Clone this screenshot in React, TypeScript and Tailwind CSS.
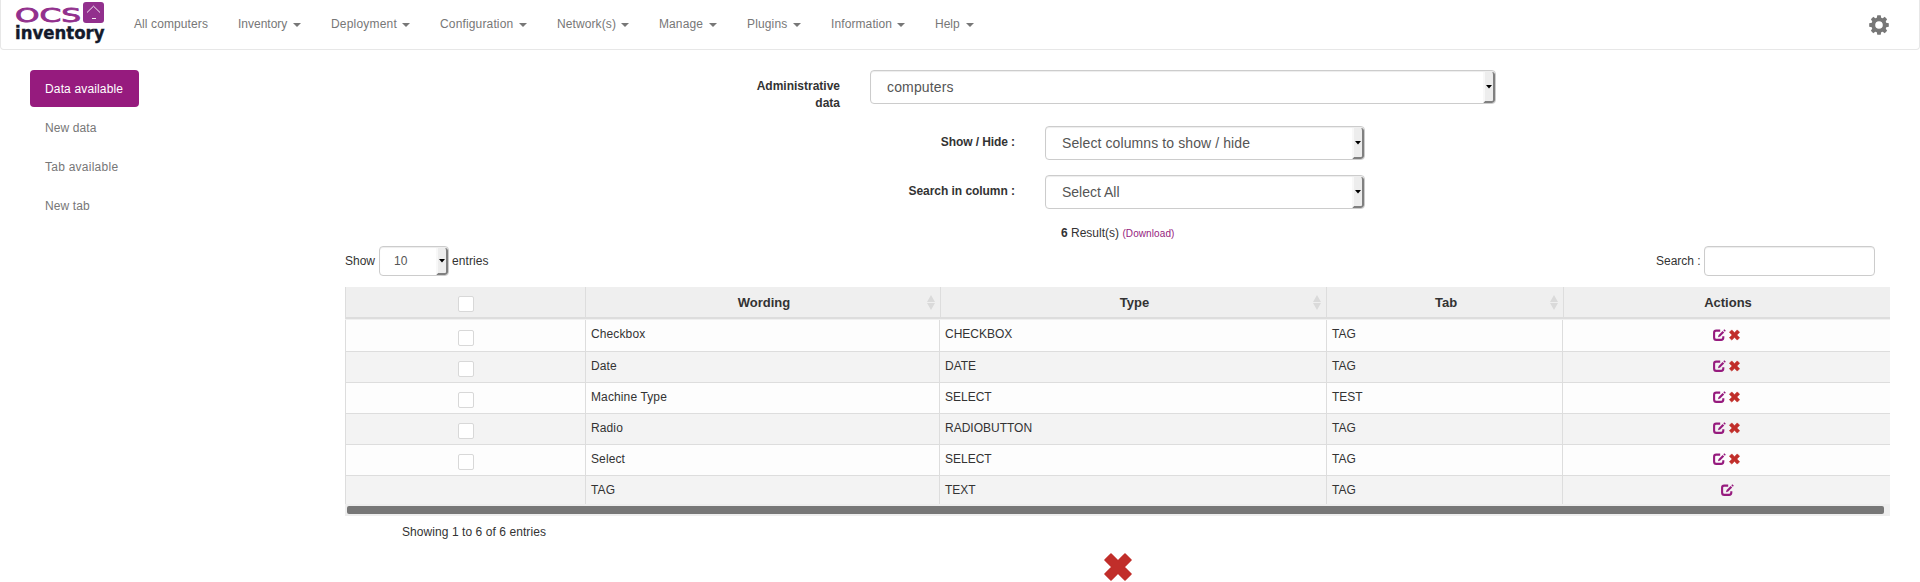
import React from "react";

const navItems = [
  { label: "All computers", cls: "w-[104px] tracking-[0.1px]", caret: false },
  { label: "Inventory", cls: "w-[93px]", caret: true },
  { label: "Deployment", cls: "w-[109px] tracking-[0.2px]", caret: true },
  { label: "Configuration", cls: "w-[117px] tracking-[0.15px]", caret: true },
  { label: "Network(s)", cls: "w-[102px] tracking-[0.1px]", caret: true },
  { label: "Manage", cls: "w-[88px] tracking-[0.1px]", caret: true },
  { label: "Plugins", cls: "w-[84px] tracking-[0.15px]", caret: true },
  { label: "Information", cls: "w-[104px] tracking-[0.1px]", caret: true },
  { label: "Help", cls: "w-[69px]", caret: true },
];

const rows = [
  { name: "Checkbox", type: "CHECKBOX", tab: "TAG", removable: true },
  { name: "Date", type: "DATE", tab: "TAG", removable: true },
  { name: "Machine Type", type: "SELECT", tab: "TEST", removable: true },
  { name: "Radio", type: "RADIOBUTTON", tab: "TAG", removable: true },
  { name: "Select", type: "SELECT", tab: "TAG", removable: true },
  { name: "TAG", type: "TEXT", tab: "TAG", removable: false },
];

function Logo() {
  return (
    <svg className="block h-[46px] w-[92px] shrink-0" viewBox="14 0 92 46">
      <text x="15" y="22.3" fontFamily="DejaVu Sans, sans-serif" fontSize="19.5" textLength="66" lengthAdjust="spacingAndGlyphs" fill="#92308d" stroke="#92308d" strokeWidth="0.8">OCS</text>
      <rect x="83" y="2" width="21" height="21" rx="3" fill="#92308d" />
      <path d="M87 12.500l6.500-6.300 6.500 6.300M92 18.500h4" fill="none" stroke="#fff" strokeWidth="0.9" />
      <text x="15" y="39" fontFamily="DejaVu Sans, sans-serif" fontWeight="bold" fontSize="18" textLength="89.5" lengthAdjust="spacingAndGlyphs" fill="#141a2b" stroke="#141a2b" strokeWidth="0.4">inventory</text>
    </svg>
  );
}

function Gear() {
  return (
    <svg className="size-5 text-[#777]" viewBox="0 0 20 20">
      <g fill="currentColor">
        {[0, 45, 90, 135].map((a) => (
          <path key={a} transform={`rotate(${a} 10 10)`} d="M8.300 .2h3.400l.8 4h-5zM8.300 19.800h3.400l.8-4h-5z" />
        ))}
      </g>
      <circle cx="10" cy="10" r="5.700" fill="none" stroke="currentColor" strokeWidth="3.800" />
    </svg>
  );
}

function Cross({ className }: { className: string }) {
  return (
    <svg className={className} viewBox="0 0 28 28">
      <path
        d="M7 1L14 8L21 1L27 7L20 14L27 21L21 27L14 20L7 27L1 21L8 14L1 7Z"
        fill="#c12e2a"
        stroke="#c12e2a"
        strokeWidth="1.6"
        strokeLinejoin="round"
      />
    </svg>
  );
}

function Edit() {
  return (
    <svg className="block h-[12px] w-[13px]" viewBox="0 0 13 12">
      <path d="M7.2 1.600H3.200Q1.100 1.600 1.100 3.800v4.600Q1.100 10.900 3.200 10.900h4.900Q10.300 10.900 10.300 8.600V7.200" fill="none" stroke="#961b7e" strokeWidth="2.1" />
      <path d="M5 8.200l.6-2.300L9.600 1.900l1.600 1.600-4 4z" fill="#961b7e" />
      <path d="M10.300 1.300l1-1 1.500 1.500-1 1z" fill="#961b7e" />
    </svg>
  );
}

function Select({ children, className, textClass }: { children: React.ReactNode; className: string; textClass: string }) {
  return (
    <div className={`flex justify-between overflow-hidden rounded-[4px] border border-[#ccc] bg-white text-[#555] shadow-[inset_0_1px_1px_rgba(0,0,0,0.075)] ${className}`}>
      <span className={`self-center ${textClass}`}>{children}</span>
      <span className="mt-px flex w-[12px] items-center justify-center rounded-r-[3px] border-r-2 border-b-2 border-l-2 border-r-[#808080] border-b-[#808080] border-l-[#f8f8f8] bg-[#ededed]">
        <svg className="h-[4px] w-[6px] shrink-0" viewBox="0 0 6 4">
          <path d="M0 0h6L3 3.500z" fill="#000" />
        </svg>
      </span>
    </div>
  );
}

function Box() {
  return <span className="block size-4 rounded-[2px] border border-[#d8d8d8] bg-white" />;
}

function HeadCell({ label, sortable }: { label: string; sortable?: boolean }) {
  return (
    <div className="flex items-center border-l border-[#ddd] pt-px text-[13px] font-bold">
      <span className="w-[14px]" />
      <span className="flex-1 pl-px text-center">{label}</span>
      <span className="w-[13px]">
        {sortable && (
          <svg className="block h-[15px] w-[8px]" viewBox="0 0 8 15">
            <path d="M0 7L4 0l4 7zM0 8h8l-4 7z" fill="#dadada" />
          </svg>
        )}
      </span>
    </div>
  );
}

export default function App() {
  return (
    <div className="flex h-[582px] w-full flex-col overflow-hidden bg-white font-['Liberation_Sans',Arial,sans-serif] text-[12px] leading-[17px] text-[#333]">
      <header className="flex h-[50px] shrink-0 justify-between rounded-b-[4px] border border-t-0 border-[#e7e7e7] text-[#777]">
        <div className="flex pl-[13px]">
          <Logo />
          <nav className="flex pl-[28px] pt-[16px]">
            {navItems.map((n) => (
              <a key={n.label} className={`flex h-[17px] whitespace-nowrap ${n.cls}`}>
                <span className={n.caret ? "flex w-[calc(100%-30px)] items-center justify-between" : ""}>
                  {n.label}
                  {n.caret && <span className="border-x-4 border-t-4 border-x-transparent border-t-[#777]" />}
                </span>
              </a>
            ))}
          </nav>
        </div>
        <div className="pr-[30px] pt-[15px]">
          <Gear />
        </div>
      </header>

      <div className="flex">
        <aside className="flex w-[345px] shrink-0 flex-col items-start gap-[2px] pl-[30px] pt-[20px] text-[#777]">
          <a className="flex h-[37px] w-[109px] items-center rounded-[4px] bg-[#961b7e] pl-[15px] pt-[2px] tracking-[0.15px] text-white">Data available</a>
          <a className="flex h-[37px] items-center pl-[15px] pt-[2px] tracking-[0.1px]">New data</a>
          <a className="flex h-[37px] items-center pl-[15px] pt-[2px] tracking-[0.25px]">Tab available</a>
          <a className="flex h-[37px] items-center pl-[15px] pt-[2px] tracking-[0.1px]">New tab</a>
        </aside>

        <main className="w-[1545px] shrink-0">
          <div className="flex h-[76px] pt-[20px]">
            <label className="w-[495px] pt-[8px] text-right font-bold">Administrative<br />data</label>
            <Select className="ml-[30px] h-[34px] w-[626px]" textClass="pl-[16px] text-[14px] tracking-[0.15px]">computers</Select>
          </div>
          <div className="flex h-[49px]">
            <label className="w-[670px] pt-[8px] text-right font-bold tracking-[-0.08px]">Show / Hide :</label>
            <Select className="ml-[30px] h-[34px] w-[320px]" textClass="pl-[16px] text-[14px] tracking-[0.1px]">Select columns to show / hide</Select>
          </div>
          <div className="flex h-[49px]">
            <label className="w-[670px] pt-[8px] text-right font-bold tracking-[-0.05px]">Search in column :</label>
            <Select className="ml-[30px] h-[34px] w-[320px]" textClass="pl-[16px] text-[14px]">Select All</Select>
          </div>
          <div className="h-[22px] pl-[716px] pt-px">
            <b>6</b> Result(s) <a className="text-[10px] tracking-[0.1px] text-[#961b7e]">(Download)</a>
          </div>
          <div className="flex h-[41px] justify-between">
            <div className="flex h-[30px] items-center">
              <span className="w-[34px]">Show</span>
              <Select className="h-[30px] w-[70px]" textClass="pl-[14px]">10</Select>
              <span className="pl-[3px] tracking-[0.1px]">entries</span>
            </div>
            <div className="flex h-[30px] items-center pr-[15px]">
              <span className="w-[48px]">Search :</span>
              <span className="h-[30px] w-[171px] rounded-[4px] border border-[#ccc] shadow-[inset_0_1px_1px_rgba(0,0,0,0.075)]" />
            </div>
          </div>

          <div className="grid h-[30px] grid-cols-[240px_355px_386px_237px_327px] bg-[#efefef]">
            <div className="flex justify-center border-l border-[#ddd] pt-[9px]"><Box /></div>
            <HeadCell label="Wording" sortable />
            <HeadCell label="Type" sortable />
            <HeadCell label="Tab" sortable />
            <HeadCell label="Actions" />
          </div>
          <div className="h-[3px] border-t-2 border-[#ddd] bg-[#f0f0f0]" />
          {rows.map((r, i) => (
            <div
              key={r.name}
              className={`grid grid-cols-[240px_354px_387px_236px_328px] ${i % 2 ? "bg-[#f3f3f3]" : "bg-[#fdfdfd]"} ${i === 0 ? "h-[32px]" : i === 5 ? "h-[28px]" : "h-[31px]"} ${i < 5 ? "border-b border-[#ddd]" : ""}`}
            >
              <div className={`flex justify-center border-l border-[#ddd] ${i === 0 ? "pt-[10px]" : "pt-[9px]"}`}>{r.removable && <Box />}</div>
              <div className="border-l border-[#ddd] pl-[5px] pt-[6px] tracking-[0.12px]">{r.name}</div>
              <div className="border-l border-[#ddd] pl-[5px] pt-[6px]">{r.type}</div>
              <div className="border-l border-[#ddd] pl-[5px] pt-[6px]">{r.tab}</div>
              <div className={`flex justify-center gap-[3px] border-l border-[#ddd] ${i === 0 ? "pt-[9px]" : "pt-[8px]"} ${r.removable ? "" : "pl-px"}`}>
                <Edit />
                {r.removable && <Cross className="block h-[12px] w-[11px]" />}
              </div>
            </div>
          ))}
          <div className="h-[12px] bg-[#eee] py-[2px] pl-[2px]">
            <div className="h-[8px] w-[1537px] rounded-[2px] bg-[#777]" />
          </div>
          <div className="pl-[57px] pt-[8px] tracking-[0.07px]">Showing 1 to 6 of 6 entries</div>
          <div className="pl-[759px] pt-[12px]"><Cross className="block size-[28px]" /></div>
        </main>
      </div>
    </div>
  );
}
